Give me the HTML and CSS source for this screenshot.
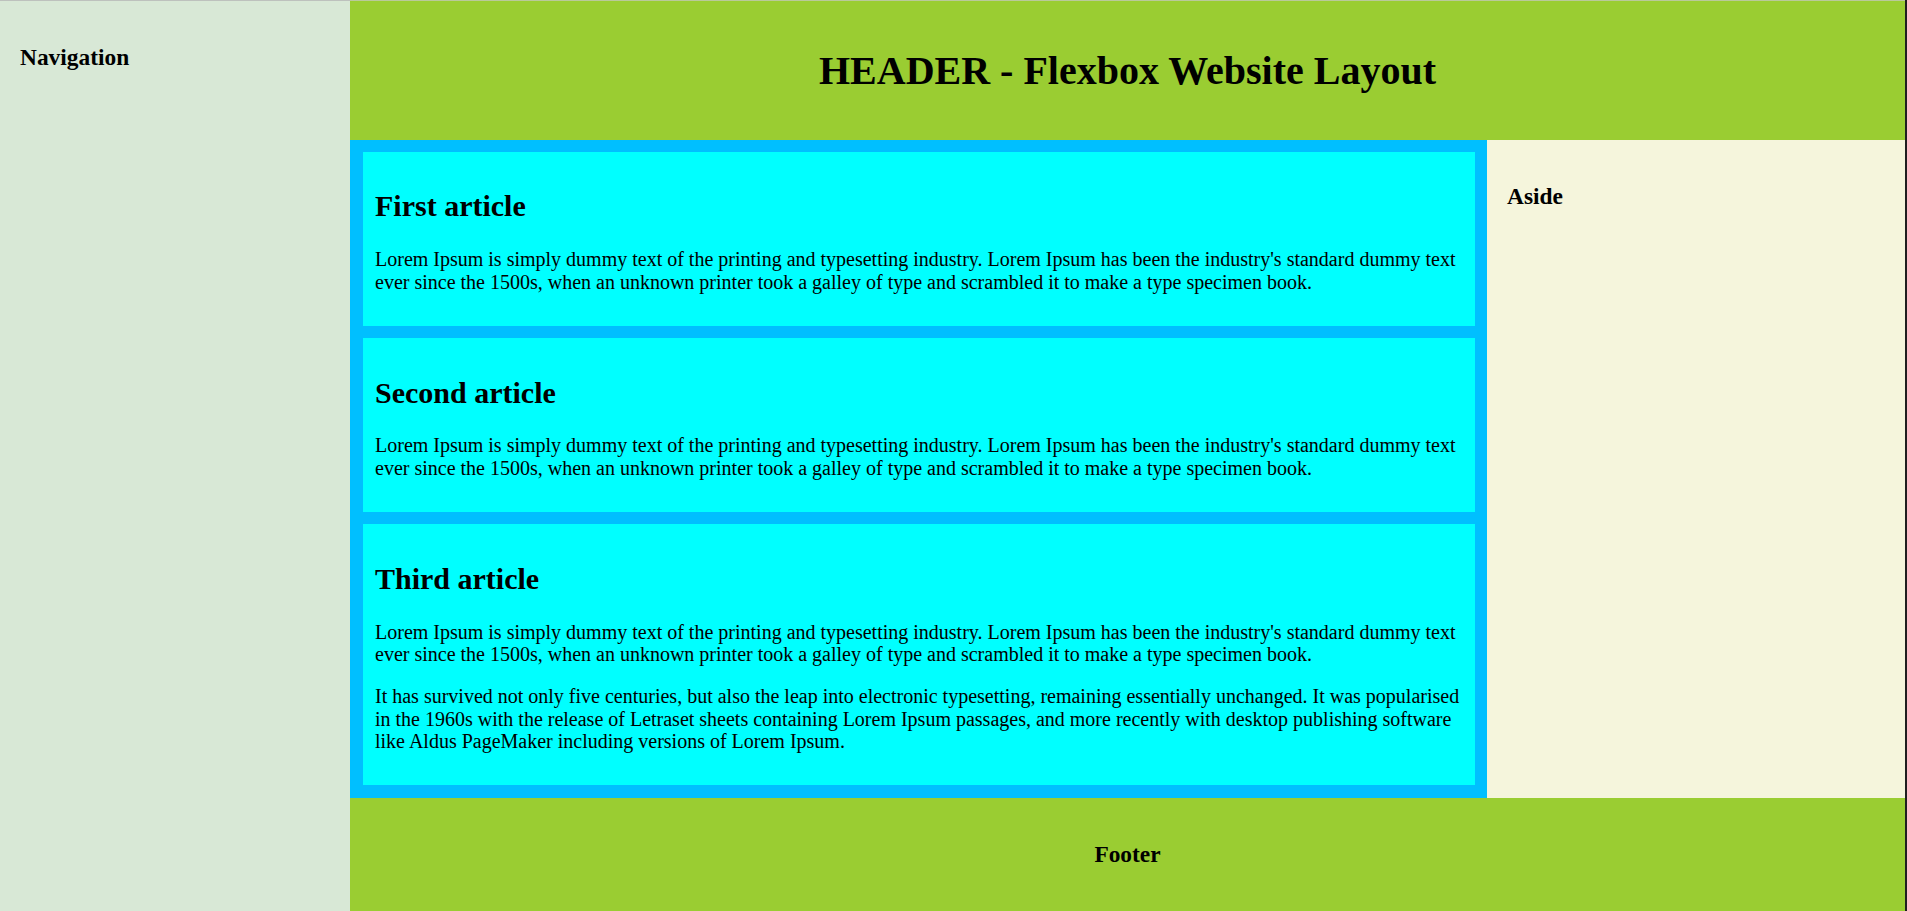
FILE: index.html
```html
<!DOCTYPE html>
<html lang="en">
<head>
<meta charset="utf-8">
<title>Flexbox Website Layout</title>
<link rel="stylesheet" href="styles.css">
</head>
<body>
<div class="page">
  <nav class="nav">
    <h3 class="nav-title">Navigation</h3>
  </nav>
  <div class="column">
    <header class="header">
      <h1 class="header-title">HEADER - Flexbox Website Layout</h1>
    </header>
    <div class="middle">
      <main class="main">
        <article class="article">
          <h2 class="article-title">First article</h2>
          <p class="text">Lorem Ipsum is simply dummy text of the printing and typesetting industry. Lorem Ipsum has been the industry's standard dummy text ever since the 1500s, when an unknown printer took a galley of type and scrambled it to make a type specimen book.</p>
        </article>
        <article class="article">
          <h2 class="article-title">Second article</h2>
          <p class="text">Lorem Ipsum is simply dummy text of the printing and typesetting industry. Lorem Ipsum has been the industry's standard dummy text ever since the 1500s, when an unknown printer took a galley of type and scrambled it to make a type specimen book.</p>
        </article>
        <article class="article">
          <h2 class="article-title">Third article</h2>
          <p class="text">Lorem Ipsum is simply dummy text of the printing and typesetting industry. Lorem Ipsum has been the industry's standard dummy text ever since the 1500s, when an unknown printer took a galley of type and scrambled it to make a type specimen book.</p>
          <p class="text">It has survived not only five centuries, but also the leap into electronic typesetting, remaining essentially unchanged. It was popularised in the 1960s with the release of Letraset sheets containing Lorem Ipsum passages, and more recently with desktop publishing software like Aldus PageMaker including versions of Lorem Ipsum.</p>
        </article>
      </main>
      <aside class="aside">
        <h3 class="aside-title">Aside</h3>
      </aside>
    </div>
    <footer class="footer">
      <h3 class="footer-title">Footer</h3>
    </footer>
  </div>
</div>
</body>
</html>
```
FILE: styles.css
```css
html, body {
  margin: 0;
  padding: 0;
}

body {
  background: #1f1f1f;
  font-family: "Liberation Serif", "Times New Roman", serif;
  font-size: 20px;
  line-height: 1.13;
  color: #000;
}

.page {
  display: flex;
  margin-right: 2px;
  min-height: 911px;
}

.nav {
  width: 350px;
  flex: none;
  box-sizing: border-box;
  background: #d8e8d6;
  border-top: 1px solid rgba(180, 180, 180, 0.75);
  padding: 20px;
}

.nav-title,
.aside-title,
.footer-title {
  font-size: 23.4px;
  font-weight: bold;
  margin: 23.4px 0;
}

.column {
  flex: 1;
  display: flex;
  flex-direction: column;
  border-top: 1px solid rgba(200, 200, 200, 0.7);
  background: #9acd32;
}

.header {
  background: #9acd32;
  padding: 20px;
}

.header-title {
  font-size: 40px;
  line-height: 45px;
  font-weight: bold;
  text-align: center;
  margin: 26.8px 0;
}

.middle {
  display: flex;
}

.main {
  flex: 1;
  background: #00bfff;
  padding: 12.5px;
  display: flex;
  flex-direction: column;
  gap: 12.5px;
}

.article {
  background: #00ffff;
  padding: 12.5px;
}

.article-title {
  font-size: 30px;
  line-height: 34px;
  font-weight: bold;
  margin: 24.9px 0;
}

.text {
  line-height: 22.4px;
  margin: 20px 0;
}

.aside {
  width: 418px;
  flex: none;
  box-sizing: border-box;
  background: #f5f5dc;
  padding: 20px;
}

.footer {
  background: #9acd32;
  padding: 20px;
  text-align: center;
}
```
